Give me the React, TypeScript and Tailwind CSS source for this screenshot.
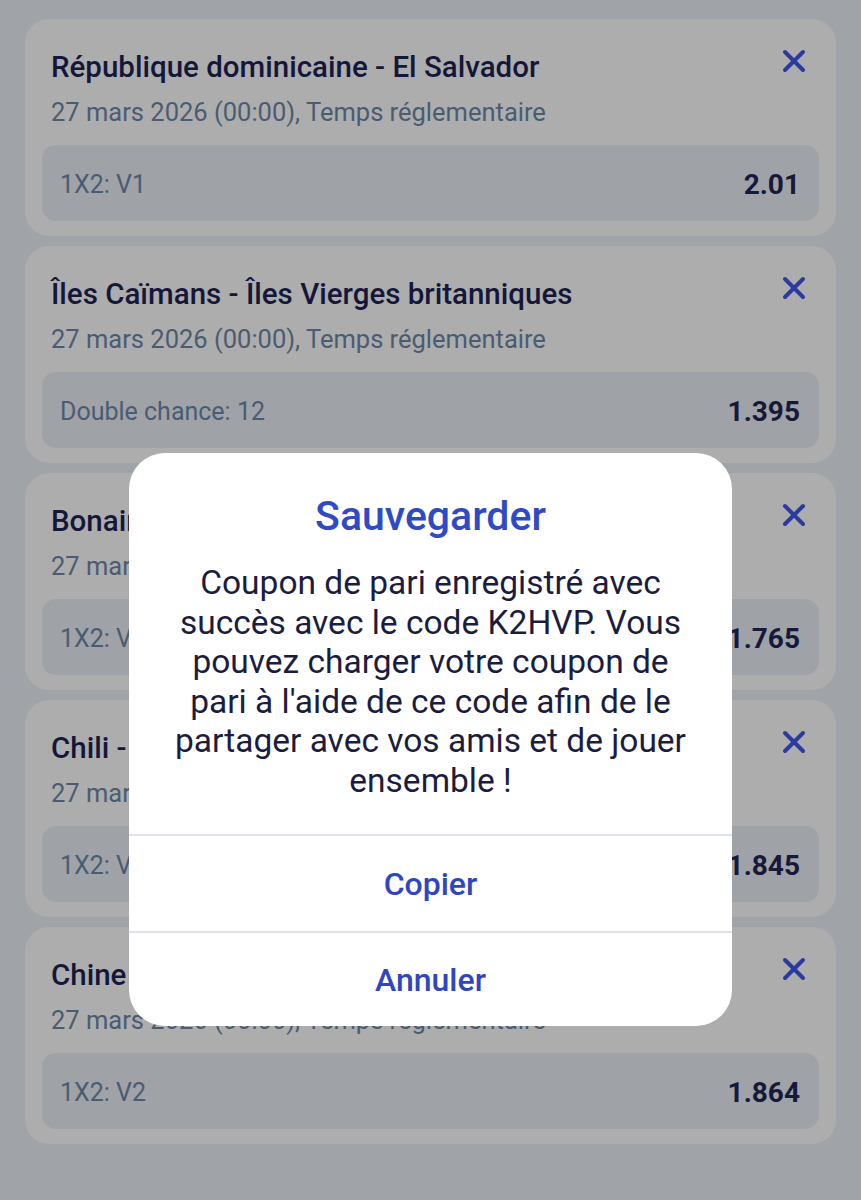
import React from "react";

interface Bet {
  title: string;
  date: string;
  market: string;
  odds: string;
}

const bets: Bet[] = [
  { title: "République dominicaine - El Salvador", date: "27 mars 2026 (00:00), Temps réglementaire", market: "1X2: V1", odds: "2.01" },
  { title: "Îles Caïmans - Îles Vierges britanniques", date: "27 mars 2026 (00:00), Temps réglementaire", market: "Double chance: 12", odds: "1.395" },
  { title: "Bonaire - Turks-et-Caïcos", date: "27 mars 2026 (00:00), Temps réglementaire", market: "1X2: V1", odds: "1.765" },
  { title: "Chili - Cap-Vert", date: "27 mars 2026 (00:00), Temps réglementaire", market: "1X2: V1", odds: "1.845" },
  { title: "Chine - Curaçao", date: "27 mars 2026 (00:00), Temps réglementaire", market: "1X2: V2", odds: "1.864" },
];

function CloseIcon() {
  return (
    <svg width="24" height="24" viewBox="0 0 24 24" className="shrink-0">
      <path d="M3 3 L21 21 M21 3 L3 21" stroke="#2b3a9e" strokeWidth="4" strokeLinecap="round" fill="none" />
    </svg>
  );
}

function BetCard({ bet }: { bet: Bet }) {
  return (
    <div className="rounded-[24px] bg-[#adadad] px-[17px] pb-[15px] pt-[31px]">
      <div className="flex items-start justify-between pl-[9px] pr-[13px]">
        <div className="text-[29.5px] font-medium leading-[34px] text-[#15173a]">{bet.title}</div>
        <div className="-mt-[1px]">
          <CloseIcon />
        </div>
      </div>
      <div className="mt-[13px] pl-[9px] text-[25.5px] leading-[30px] text-[#4b5c72]">{bet.date}</div>
      <div className="mt-[18px] flex h-[76px] items-center justify-between rounded-[14px] bg-[#9fa2a7] pl-[18px] pr-[19px] pt-[4px]">
        <span className="text-[25px] text-[#4b5c72]">{bet.market}</span>
        <span className="text-[28px] font-bold text-[#17193b]">{bet.odds}</span>
      </div>
    </div>
  );
}

export default function App() {
  return (
    <div className="relative h-[1200px] w-[861px] overflow-hidden bg-[#a0a3a8] font-['Roboto',sans-serif]">
      <div className="flex flex-col gap-[10px] px-[25px] pt-[19px]">
        {bets.map((b, i) => (
          <BetCard key={i} bet={b} />
        ))}
      </div>

      {/* dialog */}
      <div className="absolute left-[129px] top-[453px] flex w-[603px] flex-col rounded-[36px] bg-white">
        <div className="px-[20px] pt-[40px] text-center">
          <div className="text-[41px] font-medium leading-[46px] text-[#2f4ac6]">Sauvegarder</div>
          <p className="mt-[24px] whitespace-nowrap text-[33.5px] leading-[39.5px] text-[#1b1d3f]">
            Coupon de pari enregistré avec
            <br />
            succès avec le code K2HVP. Vous
            <br />
            pouvez charger votre coupon de
            <br />
            pari à l'aide de ce code afin de le
            <br />
            partager avec vos amis et de jouer
            <br />
            ensemble !
          </p>
        </div>
        <div className="mt-[34px] border-t-2 border-[#dfe2ea]">
          <button className="flex h-[95px] w-full items-center justify-center text-[32px] font-medium text-[#2f46c0]">Copier</button>
        </div>
        <div className="border-t-2 border-[#dfe2ea]">
          <button className="flex h-[93px] w-full items-center justify-center text-[32px] font-medium text-[#2f46c0]">Annuler</button>
        </div>
      </div>
    </div>
  );
}
